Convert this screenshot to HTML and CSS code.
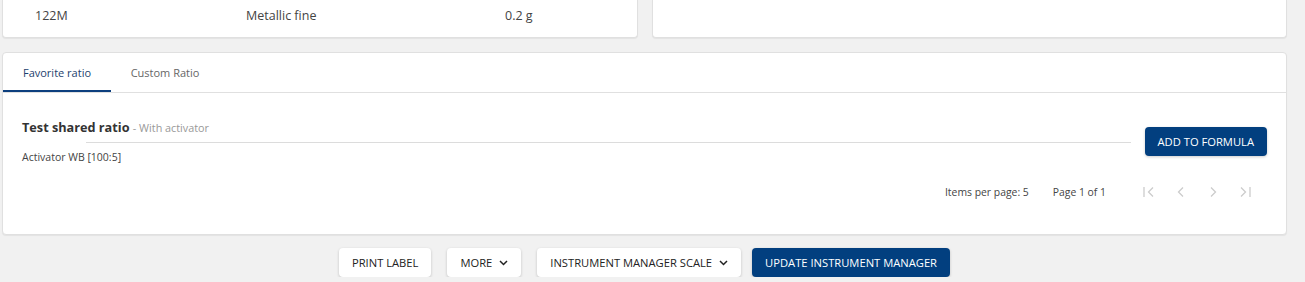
FILE: index.html
```html
<!DOCTYPE html>
<html lang="en">

<head>
    <meta charset="UTF-8">
    <meta name="viewport" content="width=device-width, initial-scale=1.0">
    <link rel="stylesheet" href="styles.css">
    <title>Formula</title>
</head>

<body>
    <div class="page">
        <!-- top cards, cut off by the scroll -->
        <div class="top-row">
            <div class="card top-card">
                <div class="component-row">
                    <span class="col-code">122M</span>
                    <span class="col-name">Metallic fine</span>
                    <span class="col-qty">0.2 g</span>
                </div>
            </div>
            <div class="card top-card"></div>
        </div>

        <div class="card ratio-card">
            <div class="tabs">
                <div class="tab active">Favorite ratio</div>
                <div class="tab">Custom Ratio</div>
            </div>
            <div class="ratio-body">
                <div class="ratio-row">
                    <div class="ratio-info">
                        <div class="ratio-title">Test shared ratio <span class="ratio-sub">- With activator</span></div>
                        <div class="ratio-line"></div>
                        <div class="ratio-item">Activator WB [100:5]</div>
                    </div>
                    <button type="button" class="btn btn-primary btn-add">ADD TO FORMULA</button>
                </div>
                <div class="paginator">
                    <span class="page-size">Items per page: 5</span>
                    <span class="page-range">Page 1 of 1</span>
                    <div class="page-nav">
                        <span class="nav-btn">
                            <svg width="14" height="14" viewBox="0 0 14 14"><path d="M2 2v10M11 2.5 6.5 7l4.5 4.5" fill="none" stroke="currentColor" stroke-width="1.3"/></svg>
                        </span>
                        <span class="nav-btn">
                            <svg width="14" height="14" viewBox="0 0 14 14"><path d="M9 2.5 4.5 7 9 11.5" fill="none" stroke="currentColor" stroke-width="1.3"/></svg>
                        </span>
                        <span class="nav-btn">
                            <svg width="14" height="14" viewBox="0 0 14 14"><path d="M5 2.5 9.5 7 5 11.5" fill="none" stroke="currentColor" stroke-width="1.3"/></svg>
                        </span>
                        <span class="nav-btn">
                            <svg width="14" height="14" viewBox="0 0 14 14"><path d="M3 2.5 7.5 7 3 11.5M12 2v10" fill="none" stroke="currentColor" stroke-width="1.3"/></svg>
                        </span>
                    </div>
                </div>
            </div>
        </div>

        <div class="actions">
            <button type="button" class="btn">PRINT LABEL</button>
            <button type="button" class="btn">MORE
                <svg class="chevron" width="9" height="6" viewBox="0 0 9 6"><path d="M1 1l3.5 3.5L8 1" fill="none" stroke="currentColor" stroke-width="1.5"/></svg>
            </button>
            <button type="button" class="btn">INSTRUMENT MANAGER SCALE
                <svg class="chevron" width="9" height="6" viewBox="0 0 9 6"><path d="M1 1l3.5 3.5L8 1" fill="none" stroke="currentColor" stroke-width="1.5"/></svg>
            </button>
            <button type="button" class="btn btn-primary btn-update">UPDATE INSTRUMENT MANAGER</button>
        </div>
    </div>
</body>

</html>
```

FILE: styles.css
```css
body {
    margin: 0;
    background-color: #f1f1f1;
    font-family: 'Open Sans', sans-serif;
    color: #333;
}

.page {
    padding: 0 18px 0 2px;
}

.card {
    background-color: #fff;
    border: 1px solid #e0e0e0;
    border-radius: 4px;
    box-shadow: 0 1px 1px rgba(0, 0, 0, .06);
    box-sizing: border-box;
}

.top-row {
    display: flex;
    gap: 14px;
}

.top-card {
    flex: 1;
    height: 38px;
    border-top: none;
    border-radius: 0 0 4px 4px;
}

.component-row {
    display: flex;
    font-size: 12.5px;
    line-height: 32px;
    color: #444;
}

.col-code {
    padding-left: 32px;
    width: 211px;
}

.col-name {
    width: 259px;
}

.ratio-card {
    margin-top: 14px;
    height: 183px;
}

.tabs {
    display: flex;
    height: 39px;
    border-bottom: 1px solid #e0e0e0;
}

.tab {
    width: 108px;
    font-size: 11px;
    line-height: 39px;
    text-align: center;
    color: #666;
    box-sizing: border-box;
}

.tab.active {
    color: #1d3f6e;
    border-bottom: 2px solid #0d3f7e;
}

.ratio-body {
    padding: 0 19px 0 19px;
}

.ratio-row {
    display: flex;
    align-items: flex-start;
    gap: 14px;
    padding-top: 25px;
}

.ratio-info {
    flex: 1;
}

.ratio-title {
    font-size: 12.7px;
    font-weight: 700;
    color: #333;
    line-height: 18px;
}

.ratio-sub {
    font-size: 10.8px;
    font-weight: 400;
    color: #999;
}

.ratio-line {
    margin: 5px 0 0 64px;
    border-top: 1px solid #dcdcdc;
}

.ratio-item {
    margin-top: 6px;
    font-size: 10.5px;
    line-height: 17px;
    color: #444;
}

.btn-add {
    margin-top: 9px;
}

.paginator {
    display: flex;
    align-items: center;
    justify-content: flex-end;
    margin-top: 19px;
    padding-right: 6px;
    font-size: 10.4px;
    color: #444;
}

.page-range {
    margin-left: 24px;
}

.page-nav {
    display: flex;
    margin-left: 27px;
}

.nav-btn {
    display: flex;
    justify-content: center;
    width: 32px;
    color: #ccc;
}

.btn {
    display: inline-flex;
    align-items: center;
    gap: 7px;
    height: 29px;
    padding: 0 13px;
    background: #fff;
    border: none;
    border-radius: 4px;
    font-family: inherit;
    font-size: 11.2px;
    color: #222;
    box-shadow: 0 1px 3px rgba(0, 0, 0, .2);
}

.btn-primary {
    background: #023f7f;
    color: #fff;
}

.actions {
    display: flex;
    justify-content: center;
    gap: 16px;
    margin-top: 13px;
}

.btn-update {
    margin-left: -5px;
}

.chevron {
    margin-top: 1px;
}
```
